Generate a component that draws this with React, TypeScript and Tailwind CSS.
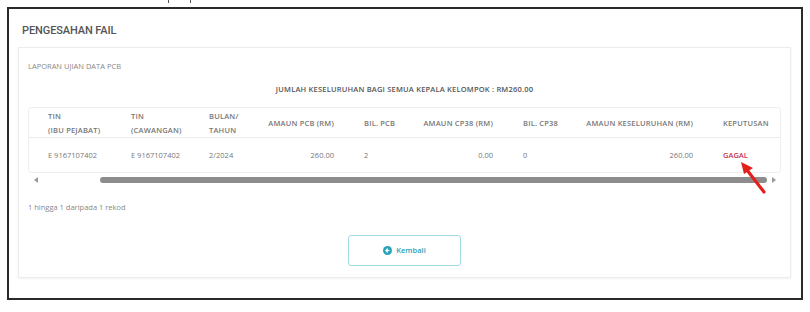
import React from "react";

const cols = "grid-cols-[87px_78px_59px_96px_57px_102px_62px_138px_74px]";

export default function App() {
  const headers: { lines: string[]; right?: boolean; first?: boolean }[] = [
    { lines: ["TIN", "(IBU PEJABAT)"], first: true },
    { lines: ["TIN", "(CAWANGAN)"] },
    { lines: ["BULAN/", "TAHUN"] },
    { lines: ["AMAUN PCB (RM)"], right: true },
    { lines: ["BIL. PCB"] },
    { lines: ["AMAUN CP38 (RM)"], right: true },
    { lines: ["BIL. CP38"] },
    { lines: ["AMAUN KESELURUHAN (RM)"], right: true },
    { lines: ["KEPUTUSAN"] },
  ];
  const row: { v: string; right?: boolean; first?: boolean; red?: boolean }[] = [
    { v: "E 9167107402", first: true },
    { v: "E 9167107402" },
    { v: "2/2024" },
    { v: "260.00", right: true },
    { v: "2" },
    { v: "0.00", right: true },
    { v: "0" },
    { v: "260.00", right: true },
    { v: "GAGAL", red: true },
  ];
  return (
    <div
      className="relative w-[810px] h-[312px] bg-white pt-[7px] pl-[7px]"
      style={{ fontFamily: '"Open Sans", "Noto Sans", sans-serif' }}
    >
      <div className="absolute left-[168px] top-0 w-[1px] h-[3px] bg-[#555]" />
      <div className="absolute left-[190px] top-0 w-[1px] h-[3px] bg-[#555]" />
      <div className="w-[796px] h-[293px] border-2 border-[#2a2a2a] flex flex-col">
        <div
          className="pl-[13px] pt-[14px] text-[11px] leading-[16px] font-medium text-[#555] tracking-[-0.1px]"
          style={{ fontFamily: 'Roboto, "Open Sans", sans-serif' }}
        >
          PENGESAHAN FAIL
        </div>
        <div className="ml-[9px] mr-[10px] mt-[8px] border border-[#ececec] shadow-[0_1px_2px_rgba(0,0,0,0.06)] pl-[9px] pr-[9px] pt-[13px] pb-[11px] flex flex-col">
          <div className="text-[7.5px] leading-[10px] text-[#888]">LAPORAN UJIAN DATA PCB</div>
          <div className="mt-[13px] text-center text-[7.5px] leading-[10px] font-semibold text-[#555] tracking-[0.2px]">
            JUMLAH KESELURUHAN BAGI SEMUA KEPALA KELOMPOK : RM260.00
          </div>
          <div className="mt-[13px] w-[753px] border border-[#efefef] rounded-[3px]">
            <div className={`grid ${cols} h-[30px] border-b border-[#ececec] items-center`}>
              {headers.map((h, i) => (
                <div
                  key={i}
                  className={`text-[7.5px] leading-[14px] font-semibold text-[#777] tracking-[0.2px] ${
                    h.first ? "pl-[19px] pr-[15px]" : "px-[15px]"
                  } ${h.right ? "text-right" : "text-left"} whitespace-nowrap`}
                >
                  {h.lines.map((l, j) => (
                    <div key={j}>{l}</div>
                  ))}
                </div>
              ))}
            </div>
            <div className={`grid ${cols} h-[34px] items-center`}>
              {row.map((c, i) => (
                <div
                  key={i}
                  className={`text-[7.5px] leading-[10px] ${
                    c.red ? "text-[#c2344f] font-semibold" : "text-[#777]"
                  } ${c.first ? "pl-[19px] pr-[15px]" : "px-[15px]"} ${
                    c.right ? "text-right" : "text-left"
                  } whitespace-nowrap`}
                >
                  {c.v}
                </div>
              ))}
            </div>
          </div>
          <div className="mt-[3px] h-[8px] w-[753px] flex items-center">
            <div className="w-[12px] flex justify-center ml-[2px]">
              <div className="w-0 h-0 border-y-[3px] border-y-transparent border-r-[4px] border-r-[#999]" />
            </div>
            <div className="ml-[58px] w-[667px] h-[6px] rounded-full bg-[#8c8c8c]" />
            <div className="ml-[5px] w-0 h-0 border-y-[3px] border-y-transparent border-l-[4px] border-l-[#999]" />
          </div>
          <div className="mt-[18px] text-[7.5px] leading-[10px] text-[#888]">1 hingga 1 daripada 1 rekod</div>
          <div className="mt-[23px] flex justify-center">
            <button className="w-[113px] h-[31px] border border-[#9fdbe6] rounded-[3px] flex items-center justify-center gap-[4px] text-[#2aa3b8] text-[7.5px] font-semibold bg-white">
              <svg width="9" height="9" viewBox="0 0 10 10">
                <circle cx="5" cy="5" r="5" fill="#2aa3b8" />
                <path d="M6.8 5H3.4M4.9 3.3L3.2 5l1.7 1.7" stroke="white" strokeWidth="1.3" fill="none" strokeLinecap="round" strokeLinejoin="round" />
              </svg>
              Kembali
            </button>
          </div>
        </div>
      </div>
      <svg className="absolute left-[736px] top-[158px]" width="36" height="40" viewBox="0 0 36 40">
        <path d="M28 34 L11 12" stroke="#e3201b" strokeWidth="3.2" strokeLinecap="round" />
        <path d="M5 4 L17 10 L8 16 Z" fill="#e3201b" />
      </svg>
    </div>
  );
}
